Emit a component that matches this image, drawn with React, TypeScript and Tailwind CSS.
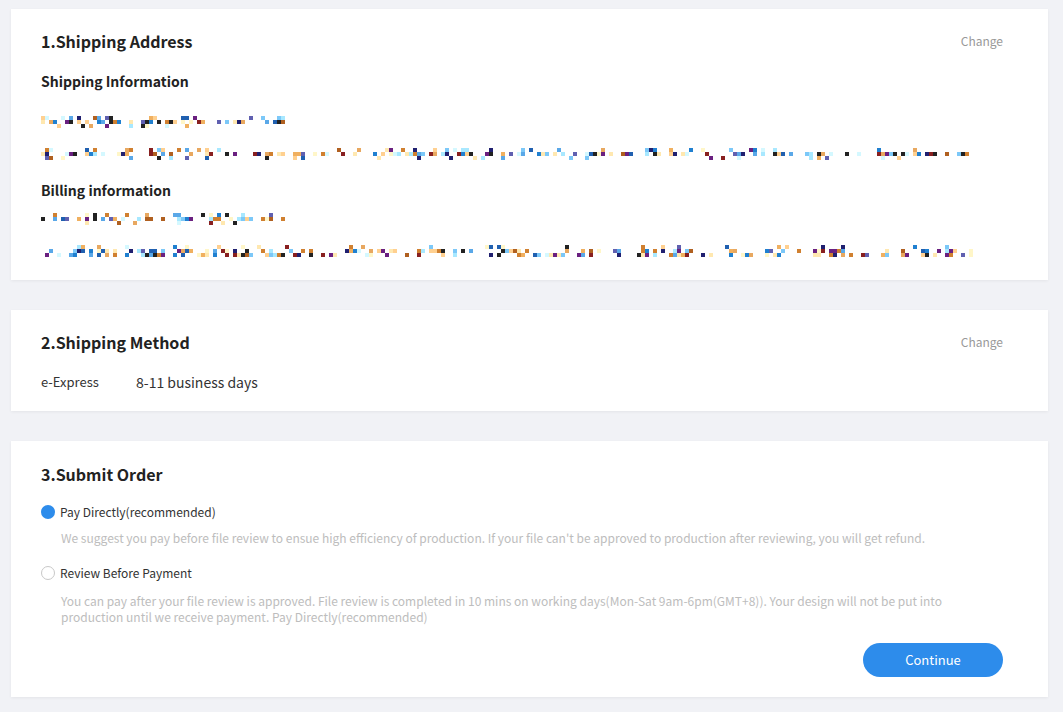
import React from "react";

const palette = [
  "#222222", "#222222", "#2080d0", "#7cc8f8", "#d4f8ff", "#f0b060", "#ffd090",
  "#b06020", "#6a2080", "#202070", "#fff6c8", "#5aa8e8", "#e8a860", "#ffe8b0",
  "#6060b0", "#882020", "#a8e8ff", "#d08030", "#2060b0",
];

function rng(seed: number) {
  let s = seed >>> 0;
  return () => {
    s = (s * 1664525 + 1013904223) >>> 0;
    return s / 4294967296;
  };
}

function Mosaic({ seed, cols, dens }: { seed: number; cols: number; dens: number[] }) {
  const r = rng(seed);
  const rects: React.ReactElement[] = [];
  for (let c = 0; c < cols; c++) {
    const gap = r() < 0.15;
    for (let row = 0; row < 3; row++) {
      const v = r();
      const col = palette[Math.floor(r() * palette.length)];
      if (!gap && v < dens[row]) {
        rects.push(<rect key={c + "-" + row} x={c * 4} y={row * 4} width={4} height={4} fill={col} />);
      }
    }
  }
  return (
    <svg width={cols * 4} height={12} className="block" shapeRendering="crispEdges">
      {rects}
    </svg>
  );
}

function Card({ children, className = "" }: { children: React.ReactNode; className?: string }) {
  return (
    <div className={"bg-white pl-[30px] pr-[45px] shadow-[0_1px_3px_rgba(0,0,0,0.06)] " + className}>
      {children}
    </div>
  );
}

function Header({ title }: { title: string }) {
  return (
    <div className="flex items-start justify-between">
      <div className="text-[16px] font-bold leading-[24px] text-[#222]">{title}</div>
      <div className="pt-[1px] text-[12px] leading-[22px] text-[#999] cursor-pointer">Change</div>
    </div>
  );
}

function HeaderPlain({ title }: { title: string }) {
  return <div className="text-[16px] font-bold leading-[24px] text-[#222]">{title}</div>;
}

export default function App() {
  return (
    <div
      className="min-h-[712px] bg-[#f1f2f6] pt-[9px] pl-[11px] pr-[15px] pb-[15px]"
      style={{ fontFamily: '"Noto Sans CJK KR", "Noto Sans", sans-serif' }}
    >
      <div className="flex flex-col gap-[30px]">
        <Card className="pt-[20px] pb-[23px]">
          <Header title="1.Shipping Address" />
          <div className="mt-[18px] text-[14px] font-bold leading-[20px] text-[#222]">Shipping Information</div>
          <div className="mt-[25px]">
            <Mosaic seed={11} cols={61} dens={[0.3, 0.55, 0.2]} />
          </div>
          <div className="mt-[20px]">
            <Mosaic seed={23} cols={233} dens={[0.25, 0.55, 0.1]} />
          </div>
          <div className="mt-[20px] text-[14px] font-bold leading-[20px] text-[#222]">Billing information</div>
          <div className="mt-[13px]">
            <Mosaic seed={37} cols={62} dens={[0.2, 0.5, 0.15]} />
          </div>
          <div className="mt-[20px]">
            <Mosaic seed={51} cols={234} dens={[0.2, 0.45, 0.5]} />
          </div>
        </Card>

        <Card className="pt-[20px] pb-[19px]">
          <Header title="2.Shipping Method" />
          <div className="mt-[18px] flex leading-[20px] text-[#333]">
            <span className="w-[95px] text-[13px]">e-Express</span>
            <span className="text-[14px]">8-11 business days</span>
          </div>
        </Card>

        <Card className="pt-[21px] pb-[20px]">
          <HeaderPlain title="3.Submit Order" />
          <label className="mt-[16px] flex items-center gap-[5px] text-[12px] leading-[20px] text-[#333]">
            <span className="h-[14px] w-[14px] rounded-full bg-[#2d8ceb]" />
            <span>Pay Directly(recommended)</span>
          </label>
          <div className="mt-[7px] pl-[20px] text-[12px] leading-[18px] text-[#bdbdbd]">
            We suggest you pay before file review to ensue high efficiency of production. If your file can't be approved to production after reviewing, you will get refund.
          </div>
          <label className="mt-[16px] flex items-center gap-[5px] text-[12px] leading-[20px] text-[#333]">
            <span className="h-[14px] w-[14px] rounded-full border border-[#c8c8c8] bg-white" />
            <span>Review Before Payment</span>
          </label>
          <div className="mt-[10px] pl-[20px] text-[12px] leading-[16px] text-[#bdbdbd]">
            You can pay after your file review is approved. File review is completed in 10 mins on working days(Mon-Sat 9am-6pm(GMT+8)). Your design will not be put into production until we receive payment. Pay Directly(recommended)
          </div>
          <div className="mt-[18px] flex justify-end">
            <button className="h-[34px] w-[140px] rounded-full bg-[#2d8ceb] text-[13px] text-white">Continue</button>
          </div>
        </Card>
      </div>
    </div>
  );
}
